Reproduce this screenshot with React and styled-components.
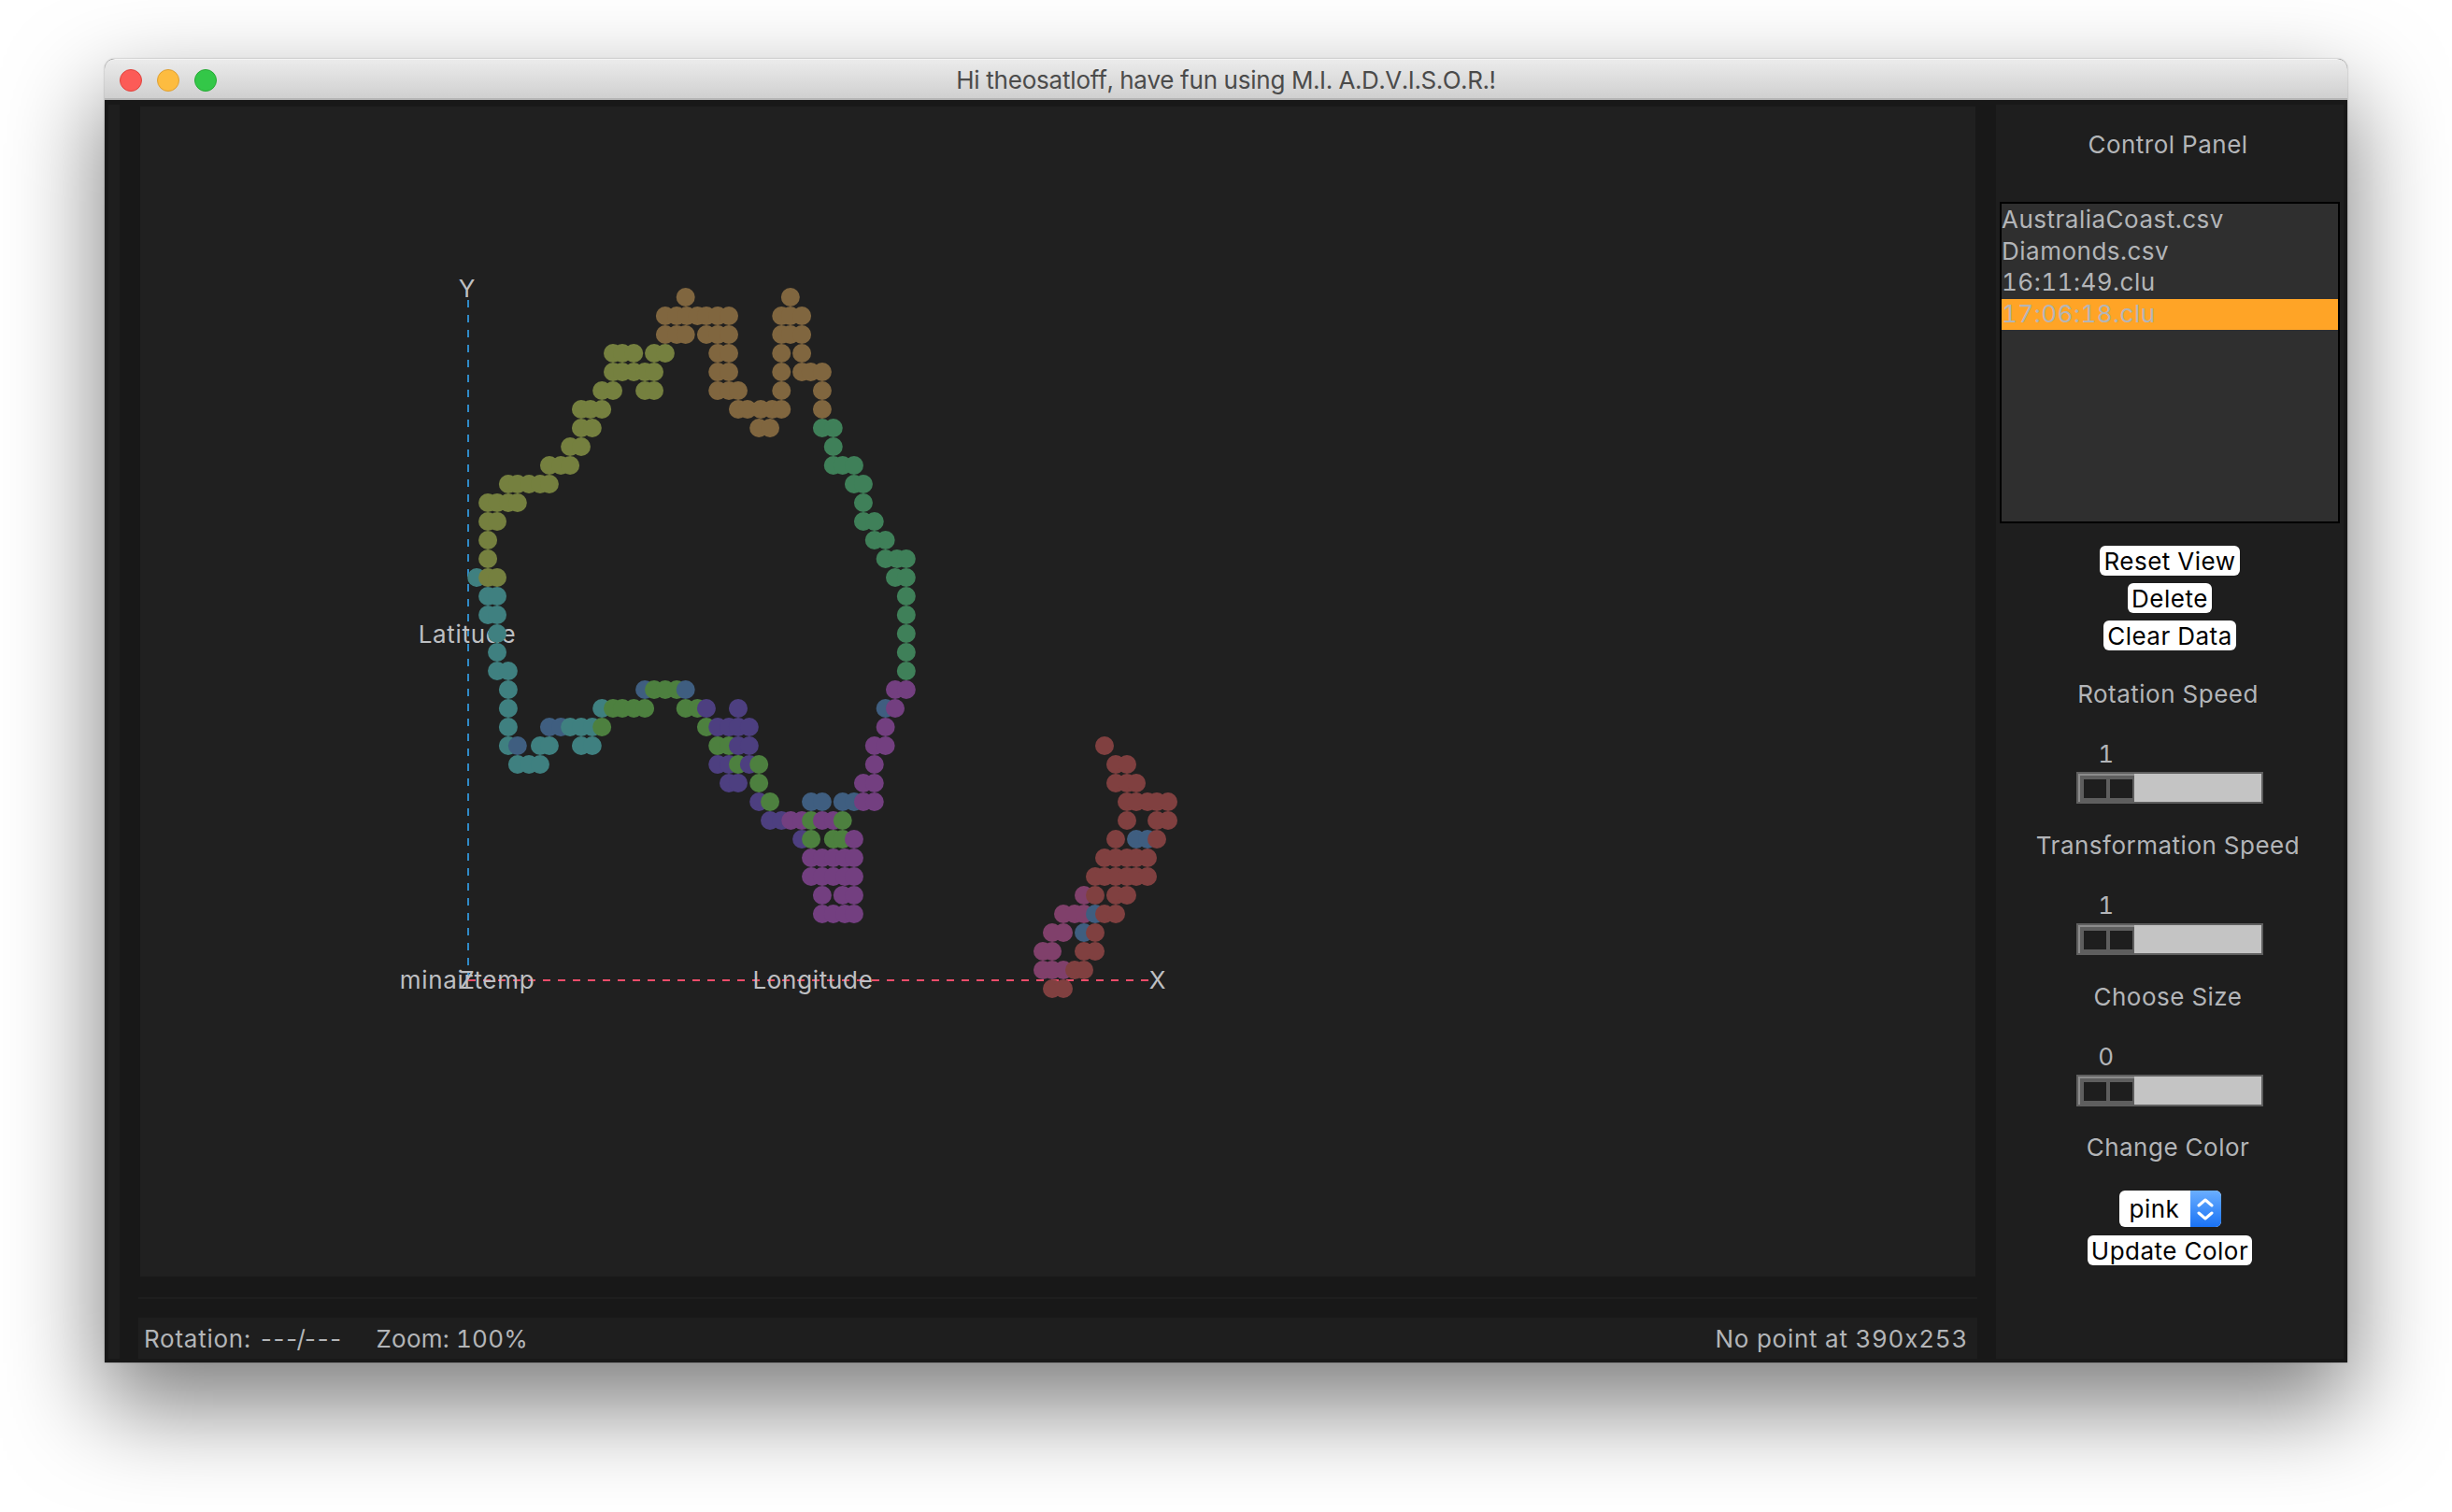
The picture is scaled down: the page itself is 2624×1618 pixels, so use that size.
import React from 'react';
import styled, { createGlobalStyle } from 'styled-components';

const Global = createGlobalStyle`
  html, body { margin: 0; padding: 0; background: #fff; }
  body {
    font-family: Inter, "Noto Sans", sans-serif;
    font-feature-settings: "calt" 0, "tnum" 1;
  }
`;

const Page = styled.div`
  width: 2624px;
  height: 1618px;
  padding: 63px 112px 0;
  box-sizing: border-box;
  overflow: hidden;
`;
const Win = styled.div`
  width: 2400px;
  height: 1395px;
  display: flex;
  flex-direction: column;
  border-radius: 11px 11px 0 0;
  box-shadow: 0 44px 100px 4px rgba(0, 0, 0, 0.5), 0 0 2px rgba(0, 0, 0, 0.35);
  background: #181818;
`;
const TitleBar = styled.div`
  position: relative;
  height: 44px;
  flex: none;
  box-sizing: border-box;
  display: flex;
  align-items: center;
  justify-content: center;
  padding-top: 2px;
  border-radius: 11px 11px 0 0;
  border-top: 1px solid #f4f4f4;
  border-bottom: 2px solid #b4b4b4;
  background: linear-gradient(#ebebeb, #d0d0d0);
  font-size: 26px;
  letter-spacing: -0.2px;
  line-height: 32px;
  color: #4b4b4b;
`;
const Lights = styled.div`
  position: absolute;
  left: 16px;
  top: 10px;
  display: flex;
  gap: 16px;
`;
const Light = styled.span`
  width: 24px;
  height: 24px;
  box-sizing: border-box;
  border-radius: 50%;
  background: ${p => p.$bg};
  border: 1px solid ${p => p.$edge};
`;
const Body = styled.div`
  flex: 1;
  min-height: 0;
  display: flex;
  padding: 5px 4px 4px;
  color: #b3b5b8;
  font-size: 26px;
  letter-spacing: 0.5px;
`;
const Strip = styled.div`
  width: 12px;
  flex: none;
  background: #1e1e1e;
`;
const Center = styled.div`
  width: 1968px;
  flex: none;
  margin: 0 20px;
  display: flex;
  flex-direction: column;
`;
const Canvas = styled.svg`
  display: block;
  width: 1964px;
  height: 1252px;
  margin: 2px 2px 0;
  background: #202020;
`;
const Rule = styled.div`
  height: 2px;
  margin: 22px 0 20px;
  background: #1e1e1e;
`;
const Status = styled.div`
  height: 44px;
  display: flex;
  align-items: center;
  padding: 2px 10px 0 6px;
  box-sizing: border-box;
  background: #1e1e1e;
  line-height: 42px;
  letter-spacing: 0.75px;
`;
const Dashes = styled.span`
  letter-spacing: -3.2px;
`;
const Zoom = styled.span`
  margin-left: 38px;
  flex: 1;
  letter-spacing: 0.2px;
`;
const Panel = styled.div`
  width: 372px;
  flex: none;
  display: flex;
  flex-direction: column;
  align-items: center;
  background: #1e1e1e;
`;
const PanelTitle = styled.div`
  height: 32px;
  line-height: 32px;
  margin: ${p => p.$top}px 4px 0 0;
`;
const FileList = styled.div`
  width: 364px;
  height: 344px;
  box-sizing: border-box;
  margin-top: 45px;
  padding-top: 1px;
  border: 2px solid #000;
  background: #2f2f2f;
`;
const FileRow = styled.div`
  height: 33.6px;
  line-height: 32.6px;
  background: ${p => (p.$active ? '#ffa426' : 'transparent')};
`;
const Btn = styled.div`
  height: 32px;
  line-height: 33px;
  padding: 0 4px;
  margin-top: ${p => p.$top}px;
  border-radius: 6px;
  background: #fff;
  color: #000;
`;
const SliderValue = styled.div`
  width: 200px;
  height: 32px;
  line-height: 32px;
  margin-top: 32px;
`;
const ValueText = styled.div`
  width: 64px;
  text-align: center;
`;
const Track = styled.div`
  width: 200px;
  height: 34px;
  margin-top: 3px;
  box-sizing: border-box;
  border: 2px solid #5f5f5f;
  background: #c4c4c4;
`;
const Thumb = styled.div`
  width: 60px;
  height: 30px;
  box-sizing: border-box;
  display: flex;
  padding: 4px;
  gap: 4px;
  background: #5e5e5e;
  border-top: 2px solid #8b8b8b;
  border-left: 2px solid #8b8b8b;
`;
const Cell = styled.div`
  width: 24px;
  flex: none;
  background: #1e1e1e;
`;
const SelectBox = styled.div`
  width: 109px;
  height: 39px;
  margin-top: 30px;
  display: flex;
  border-radius: 6px;
  overflow: hidden;
  background: #fff;
  color: #000;
`;
const SelectText = styled.div`
  flex: 1;
  line-height: 39px;
  padding-left: 11px;
`;
const SelectArrow = styled.div`
  width: 33px;
  flex: none;
  display: flex;
  align-items: center;
  justify-content: center;
  background: linear-gradient(#6aaeff, #1a73f5);
`;

const COLORS = {
  B: '#80663f', O: '#75803f', E: '#3f8059', T: '#3f8080', U: '#3f5e80',
  G: '#4d803f', I: '#4d3f80', P: '#733f80', R: '#804040', K: '#80406b',
};

const MAIN = [
  'B:872,1165',
  'B:815,847,875,905,930,962,993,1140,1165,1197',
  'B:815,847,872,930,962,993,1140,1165,1197',
  'O:669,695,727,784,815 B:962,993,1140,1197',
  'O:669,695,727,758,784 B:962,993,1140,1197,1222,1254',
  'O:638,669,758,784 B:962,993,1019,1140,1254',
  'O:580,606,638 B:1019,1045,1082,1114,1140,1254',
  'O:580,611 B:1077,1108 E:1254,1285',
  'O:549,580 E:1285',
  'O:491,523,549 E:1285,1311,1343',
  'O:376,402,434,465,491 E:1343,1369',
  'O:319,345,376,402 E:1369',
  'O:319,345 E:1369,1400',
  'O:319 E:1400,1431',
  'O:319 E:1431,1463,1489',
  'T:288 O:319,345 E:1458,1489',
  'T:319,345 E:1489',
  'T:319,345 E:1489',
  'T:345 E:1489',
  'T:345 E:1489',
  'T:345,376 E:1489',
  'T:376 U:758 G:784,815,847 U:872 P:1458,1489',
  'T:376,638 G:669,695,727,758,872,905 I:930,1019 U:1431 P:1458',
  'T:376 U:491,523 T:549,580,611 G:638,930 I:962,993,1019,1050 P:1431',
  'T:376 U:402 T:465,491,580,611 G:962,993 I:1019,1050 P:1400,1431',
  'T:402,434,465 I:962,993 G:1019 I:1050 G:1077 P:1400',
  'I:993,1019 G:1077 P:1369,1400',
  'I:1077 G:1108 U:1223,1254,1311,1343 P:1369,1400',
  'I:1108,1140 P:1166,1197 G:1223 P:1254,1285 G:1311',
  'I:1197 G:1223,1285,1311 P:1343',
  'P:1223,1254,1285,1317,1343',
  'P:1223,1254,1285,1317,1343',
  'P:1254,1311,1343',
  'P:1254,1285,1317,1343',
];
const ISLAND = [
  'R:366',
  'R:402,438',
  'R:402,438,468',
  'R:438,468,504,534,570',
  'R:438,534,570',
  'R:402 U:468,504 R:534',
  'R:366,402,438,468,504',
  'R:336,366,402,438,468,504',
  'K:300 R:336,402,438',
  'K:234,270,300 U:336 R:366,402',
  'K:198,234 U:300 R:336',
  'K:168,198 R:300,336',
  'K:168,198,234 R:270,300',
  'R:198,234',
];

const parse = (rows, y0, toX) =>
  rows.flatMap((row, r) =>
    row.split(' ').flatMap(seg => {
      const [key, xs] = seg.split(':');
      return xs.split(',').map(v => ({ x: toX(+v), y: y0 + r * 20, fill: COLORS[key] }));
    })
  );
const DOTS = [
  ...parse(MAIN, 318, v => 400 + v / 2.613),
  ...parse(ISLAND, 798, v => 1060 + v / 3),
];

const Axis = styled.line`
  stroke: ${p => p.$color};
  stroke-width: 2;
  stroke-dasharray: 8 8;
`;
const AxisLabel = styled.text`
  font-family: Inter, sans-serif;
  font-size: 26px;
  letter-spacing: 0.7px;
  fill: #bdbfc2;
  text-anchor: middle;
`;

const Chart = () => (
  <Canvas viewBox="150 114 1964 1252">
    <Axis $color="#2f8bc8" x1="501" y1="1049" x2="501" y2="320" />
    <Axis $color="#ef4d6a" x1="501" y1="1049" x2="1232" y2="1049" />
    <AxisLabel x="500" y="318">Y</AxisLabel>
    <AxisLabel x="500" y="688">Latitude</AxisLabel>
    <AxisLabel x="500" y="1058">minairtemp</AxisLabel>
    <AxisLabel x="500" y="1058">Z</AxisLabel>
    <AxisLabel x="870" y="1058">Longitude</AxisLabel>
    <AxisLabel x="1239" y="1058">X</AxisLabel>
    {DOTS.map((d, i) => (
      <circle key={i} cx={d.x} cy={d.y} r="10" fill={d.fill} />
    ))}
  </Canvas>
);

const Slider = ({ value }) => (
  <>
    <SliderValue><ValueText>{value}</ValueText></SliderValue>
    <Track>
      <Thumb><Cell /><Cell /></Thumb>
    </Track>
  </>
);

export default function App() {
  return (
    <Page>
      <Global />
      <Win>
        <TitleBar>
          <Lights>
            <Light $bg="#fc5b57" $edge="#e0443e" />
            <Light $bg="#fdbc40" $edge="#dea034" />
            <Light $bg="#33c748" $edge="#27aa35" />
          </Lights>
          Hi theosatloff, have fun using M.I. A.D.V.I.S.O.R.!
        </TitleBar>
        <Body>
          <Strip />
          <Center>
            <Chart />
            <Rule />
            <Status>
              <span>Rotation: <Dashes>---/---</Dashes></span>
              <Zoom>Zoom: 100%</Zoom>
              <span>No point at 390x253</span>
            </Status>
          </Center>
          <Panel>
            <PanelTitle $top={27}>Control Panel</PanelTitle>
            <FileList>
              <FileRow>AustraliaCoast.csv</FileRow>
              <FileRow>Diamonds.csv</FileRow>
              <FileRow>16:11:49.clu</FileRow>
              <FileRow $active>17:06:18.clu</FileRow>
            </FileList>
            <Btn $top={24}>Reset View</Btn>
            <Btn $top={8}>Delete</Btn>
            <Btn $top={8}>Clear Data</Btn>
            <PanelTitle $top={31}>Rotation Speed</PanelTitle>
            <Slider value="1" />
            <PanelTitle $top={29}>Transformation Speed</PanelTitle>
            <Slider value="1" />
            <PanelTitle $top={29}>Choose Size</PanelTitle>
            <Slider value="0" />
            <PanelTitle $top={28}>Change Color</PanelTitle>
            <SelectBox>
              <SelectText>pink</SelectText>
              <SelectArrow>
                <svg width="18" height="28" viewBox="0 0 18 28" fill="none" stroke="#fff" strokeWidth="3" strokeLinecap="round" strokeLinejoin="round">
                  <path d="M2 10 L9 4 L16 10" />
                  <path d="M2 18 L9 24 L16 18" />
                </svg>
              </SelectArrow>
            </SelectBox>
            <Btn $top={9}>Update Color</Btn>
          </Panel>
        </Body>
      </Win>
    </Page>
  );
}
